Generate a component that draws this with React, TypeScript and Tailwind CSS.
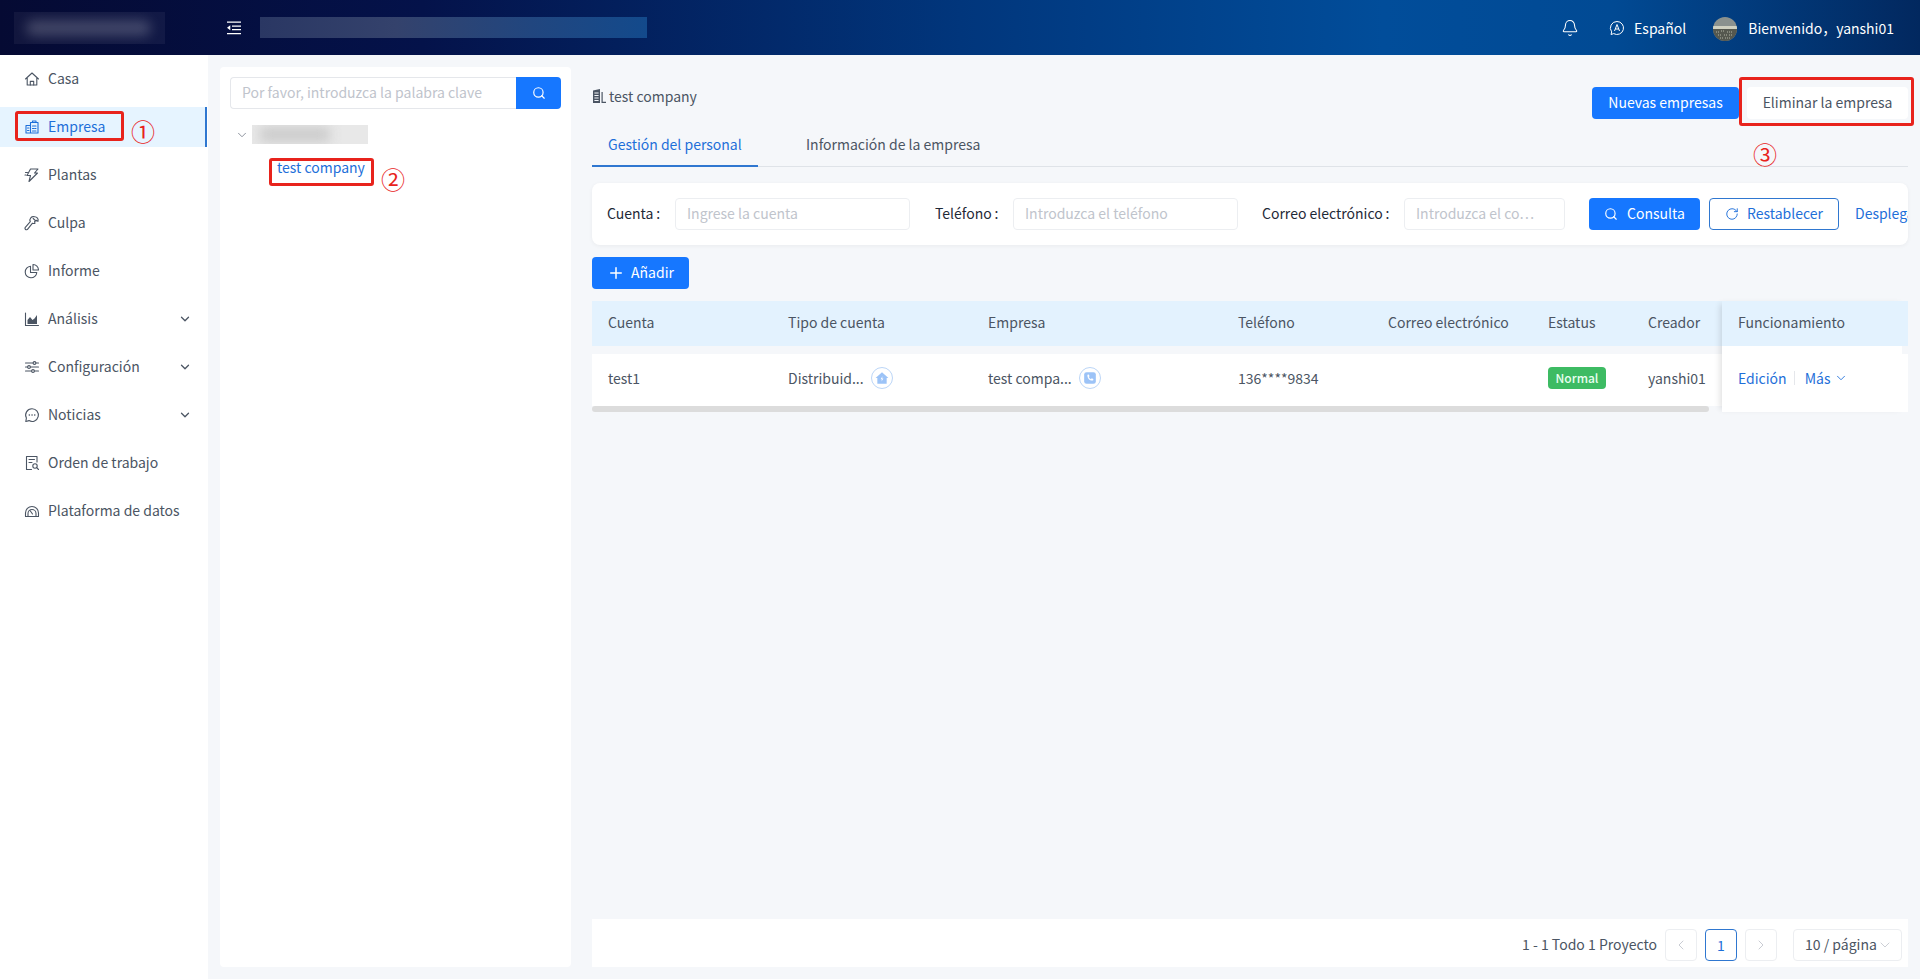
import { ReactNode } from "react";
import { Bell, ChevronDown, ChevronLeft, ChevronRight, Plus, RotateCw, Search } from "lucide-react";

const font = "font-['Noto_Sans_CJK_SC','Noto_Sans',sans-serif]";

const Svg = ({ children, className = "h-4 w-4" }: { children: ReactNode; className?: string }) => (
  <svg viewBox="0 0 16 16" fill="none" stroke="currentColor" strokeWidth="1.1" strokeLinecap="round" strokeLinejoin="round" className={className}>
    {children}
  </svg>
);

const HomeIcon = () => (
  <Svg>
    <path d="M1.5 8 8 2l6.5 6M3.2 6.8V14h9.6V6.8" />
    <path d="M6.3 14v-3.6h3.4V14" />
  </Svg>
);
const CompanyIcon = () => (
  <Svg>
    <path d="M2 6.5h4.5V14H2zM6.5 3.5h7.5V14H6.5z" />
    <path d="M8.5 3.5V2h3.5v1.500M3.5 9h1.500M3.500 11.500h1.500M8.500 7h3.500M8.500 9.500h1.500M11 9.500h1M8.500 12h3.500" />
  </Svg>
);
const BoltIcon = () => (
  <Svg>
    <path d="M6.500 2H14l-3.500 4H13.500L5 14.500l1.500-6H3z" />
    <path d="M1.500 5.500h2M1 8h1" />
  </Svg>
);
const WrenchIcon = () => (
  <Svg>
    <path d="M10.500 1.800a3.500 3.500 0 0 1 3.500 4.600l-1.800-1.200-1.600 1.200.3 2a3.500 3.500 0 0 1-2.400-.2l-4.800 6a1.500 1.500 0 0 1-2.400-1.900l5-5.600a3.500 3.500 0 0 1 4.200-4.900z" />
    <path d="M9.200 3.500 12 6.200" />
  </Svg>
);
const PieIcon = () => (
  <Svg>
    <path d="M6.500 3.200a5.800 5.800 0 1 0 6.300 6.300H6.500z" />
    <path d="M9 1.500a5.500 5.500 0 0 1 5.500 5.500H9z" />
  </Svg>
);
const AreaIcon = () => (
  <Svg>
    <path d="M1.500 2v12.500h13" />
    <path d="M3.500 13V9l2.500-3 2.500 3 2-1.500L13 4v9z" fill="currentColor" stroke="none" />
  </Svg>
);
const SlidersIcon = () => (
  <Svg>
    <path d="M1.500 4h7.500M12 4h2.500M1.500 8h2M6.500 8h8M1.500 12h6M10.500 12h4" />
    <circle cx="10.500" cy="4" r="1.400" />
    <circle cx="5" cy="8" r="1.400" />
    <circle cx="9" cy="12" r="1.400" />
  </Svg>
);
const ChatIcon = () => (
  <Svg>
    <path d="M8 1.800a6.300 6.300 0 1 1-3 11.800L1.800 14.500l.6-3.400A6.300 6.300 0 0 1 8 1.800z" />
    <path d="M5.300 8h.1M8 8h.1M10.700 8h.1" strokeWidth="1.500" />
  </Svg>
);
const OrderIcon = () => (
  <Svg>
    <path d="M13 7V1.500H2.500v13h5" />
    <path d="M5 4.500h5.500M5 7.500h3" />
    <circle cx="11" cy="11" r="2.200" />
    <path d="m12.700 12.700 1.800 1.800" />
  </Svg>
);
const GaugeIcon = () => (
  <Svg>
    <path d="M1.500 13.500V10a6.500 6.500 0 0 1 13 0v3.500z" />
    <path d="M4 13.500V10.500a4 4 0 0 1 8 0v3M6 7.500 8.500 11" />
  </Svg>
);
const OutdentIcon = () => (
  <svg viewBox="0 0 16 16" fill="currentColor" className="h-4 w-4">
    <path d="M1 1.500h14v1.300H1zM6 5.500h9v1.300H6zM6 9h9v1.300H6zM1 13h14v1.300H1zM4.300 5.300v5L1 7.800z" />
  </svg>
);
const TranslateIcon = () => (
  <svg viewBox="0 0 16 16" fill="none" stroke="currentColor" strokeWidth="1" strokeLinejoin="round" className="h-4 w-4">
    <path d="M8 1.500a6.500 6.500 0 1 1-3.300 12.100l-2.700.9.700-2.600A6.500 6.500 0 0 1 8 1.500z" />
    <path d="M5.500 11 8 4.500l2.500 6.500M6.400 9h3.200" />
  </svg>
);
const BuildingIcon = () => (
  <svg viewBox="0 0 14 14" fill="#4b5563" className="h-[14px] w-[14px]">
    <path d="M1 1.500 8 0v14H1zM2.400 3.500v1h4.200v-1zM2.400 6v1h4.200V6zM2.400 8.500v1h4.200v-1zM2.400 11v1h4.200v-1z" fillRule="evenodd" />
    <path d="M9.500 3h1.200v9.800H14V14H9.500z" />
  </svg>
);
const HouseBadge = () => (
  <span className="flex h-[22px] w-[22px] items-center justify-center rounded-full border border-[#bcd6f7] bg-white">
    <svg viewBox="0 0 12 12" fill="#9cc3f7" className="h-[14px] w-[14px]">
      <path d="M6 1 11.500 6H10v5H2V6H.5z" />
      <path d="M6.400 4.500 4.800 7h1.100l-.3 2L7.200 6.400H6.100z" fill="#fff" />
    </svg>
  </span>
);
const PhoneBadge = () => (
  <span className="flex h-[22px] w-[22px] items-center justify-center rounded-full border border-[#bcd6f7] bg-white">
    <svg viewBox="0 0 12 12" className="h-[14px] w-[14px]">
      <rect x="1" y="1" width="10" height="10" rx="2" fill="#9cc3f7" />
      <path d="M3.800 3.200 5 3l.6 1.500-.7.600c.4.800 1 1.400 1.900 1.900l.6-.7 1.500.6-.2 1.300c-3 .3-5.200-2-4.900-5z" fill="#fff" />
    </svg>
  </span>
);

const Circled = ({ children, className }: { children: string; className: string }) => (
  <span className={`absolute text-[24px] leading-none text-[#e8231c] ${className}`}>{children}</span>
);

const menu: { icon: ReactNode; label: string; arrow?: boolean; active?: boolean }[] = [
  { icon: <HomeIcon />, label: "Casa" },
  { icon: <CompanyIcon />, label: "Empresa", active: true },
  { icon: <BoltIcon />, label: "Plantas" },
  { icon: <WrenchIcon />, label: "Culpa" },
  { icon: <PieIcon />, label: "Informe" },
  { icon: <AreaIcon />, label: "Análisis", arrow: true },
  { icon: <SlidersIcon />, label: "Configuración", arrow: true },
  { icon: <ChatIcon />, label: "Noticias", arrow: true },
  { icon: <OrderIcon />, label: "Orden de trabajo" },
  { icon: <GaugeIcon />, label: "Plataforma de datos" },
];

const Header = () => (
  <header className="flex h-[55px] shrink-0 items-center bg-[linear-gradient(90deg,#050a33_0%,#04124a_22%,#01367c_50%,#014d9a_72%,#014a94_84%,#02285f_100%)] text-sm text-white">
    <div className="ml-[14px] h-[32px] w-[151px] overflow-hidden bg-white/5">
      <div className="ml-[12px] mt-[8px] h-[16px] w-[125px] rounded-full bg-white/20 blur-[6px]" />
    </div>
    <span className="ml-[61px] text-white">
      <OutdentIcon />
    </span>
    <div className="ml-[18px] h-[21px] w-[387px] bg-[linear-gradient(90deg,#2a3763,#34426c_35%,#21467f_70%,#134a8c)]" />
    <div className="ml-auto flex items-center">
      <Bell className="mr-[30px] h-[18px] w-[18px]" strokeWidth={1.4} />
      <span className="mr-[9px]">
        <TranslateIcon />
      </span>
      <span>Español</span>
      <svg viewBox="0 0 24 24" className="ml-[27px] mt-[2px] h-6 w-6 rounded-full">
        <rect width="24" height="24" fill="#8a918e" />
        <rect y="9" width="24" height="3" fill="#cfd0c0" />
        <rect y="12" width="24" height="12" fill="#55584f" />
        <path d="M3 15h3M8 14h4M14 15h5M5 18h4M11 18h3M16 18h4M7 21h3M12 21h5" stroke="#b4b6a8" strokeWidth="1.200" strokeDasharray="1 1" />
      </svg>
      <span className="ml-[11px] mr-[26px]">Bienvenido，yanshi01</span>
    </div>
  </header>
);

const Sidebar = () => (
  <aside className="relative flex w-[208px] shrink-0 flex-col gap-2 bg-white pt-1 text-sm text-[#4b5563]">
    {menu.map((m) => (
      <div
        key={m.label}
        className={`flex h-10 items-center pl-[24px] pr-[16px] ${m.active ? "mr-px border-r-[2px] border-[#2f77d0] bg-[#e6f4ff] text-[#1e6fd9]" : ""}`}
      >
        <span className="mr-[8px]">{m.icon}</span>
        <span className="pb-[2px]">{m.label}</span>
        {m.arrow && <ChevronDown className="ml-auto h-[14px] w-[14px]" strokeWidth={2.2} />}
      </div>
    ))}
    <div className="absolute left-[15px] top-[56px] h-[30px] w-[109px] rounded-[3px] border-[3px] border-[#e8231c]" />
    <Circled className="left-[131px] top-[64px]">①</Circled>
  </aside>
);

const CompanyTree = () => (
  <section className="relative flex w-[351px] shrink-0 flex-col rounded bg-white p-[10px] text-sm">
    <div className="flex h-8">
      <div className="flex flex-1 items-center rounded-l border border-r-0 border-[#e5e7eb] pb-[2px] pl-[11px] text-[#c0c4cc]">Por favor, introduzca la palabra clave</div>
      <div className="flex w-[45px] items-center justify-center rounded-r bg-[#1677ff] text-white">
        <Search className="h-[14px] w-[14px]" strokeWidth={2} />
      </div>
    </div>
    <div className="ml-[5px] mt-[16px] flex h-[19px] items-center">
      <ChevronDown className="h-[14px] w-[14px] text-[#6b7280]" strokeWidth={1.3} />
      <div className="ml-[3px] h-[19px] w-[116px] overflow-hidden bg-[#e8e8e8]">
        <div className="ml-[8px] mt-[2px] h-[15px] w-[70px] bg-[#cbcbcb] blur-[6px]" />
      </div>
    </div>
    <div className="ml-[47px] mt-[11px] leading-[24px] text-[#1e6fd9]">test company</div>
    <div className="absolute left-[49px] top-[91px] h-[28px] w-[105px] rounded-[3px] border-[3px] border-[#e8231c]" />
    <Circled className="left-[161px] top-[100px]">②</Circled>
  </section>
);

const Field = ({ label, placeholder, labelW, inputW }: { label: string; placeholder: string; labelW: string; inputW: string }) => (
  <div className="flex shrink-0 items-center">
    <span className={`${labelW} shrink-0 pb-[2px] text-[#1f2937]`}>{label}</span>
    <div className={`${inputW} flex h-8 items-center overflow-hidden whitespace-nowrap rounded border border-[#eceef1] pb-[2px] pl-[11px] text-[#c0c4cc]`}>{placeholder}</div>
  </div>
);

const FilterCard = () => (
  <div className="mt-[16px] flex h-[62px] shrink-0 items-center overflow-hidden rounded-lg bg-white pl-[15px] text-sm shadow-[0_1px_4px_rgba(0,0,0,0.05)]">
    <Field label={"Cuenta\u2009:"} placeholder="Ingrese la cuenta" labelW="w-[68px]" inputW="w-[235px]" />
    <div className="ml-[25px] shrink-0">
      <Field label={"Teléfono\u2009:"} placeholder="Introduzca el teléfono" labelW="w-[78px]" inputW="w-[225px]" />
    </div>
    <div className="ml-[24px] shrink-0">
      <Field label={"Correo electrónico\u2009:"} placeholder="Introduzca el co⋯" labelW="w-[142px]" inputW="w-[161px]" />
    </div>
    <button className="ml-[24px] flex h-8 w-[111px] shrink-0 items-center justify-center gap-[9px] rounded bg-[#1677ff] text-white">
      <Search className="h-[14px] w-[14px]" strokeWidth={2} />
      <span className="pb-[2px]">Consulta</span>
    </button>
    <button className="ml-[9px] flex h-8 w-[130px] shrink-0 items-center justify-center gap-2 rounded border border-[#2f77d0] text-[#1e6fd9]">
      <RotateCw className="h-[14px] w-[14px]" strokeWidth={1.6} />
      <span className="pb-[2px]">Restablecer</span>
    </button>
    <span className="ml-[16px] whitespace-nowrap pb-[2px] text-[#1e6fd9]">Desplegar</span>
  </div>
);

const columns: { title: string; width: string; cell: ReactNode }[] = [
  { title: "Cuenta", width: "w-[180px]", cell: "test1" },
  {
    title: "Tipo de cuenta",
    width: "w-[200px]",
    cell: (
      <span className="flex items-center gap-[7px]">
        Distribuid... <HouseBadge />
      </span>
    ),
  },
  {
    title: "Empresa",
    width: "w-[250px]",
    cell: (
      <span className="flex items-center gap-[7px]">
        test compa... <PhoneBadge />
      </span>
    ),
  },
  { title: "Teléfono", width: "w-[150px]", cell: "136****9834" },
  { title: "Correo electrónico", width: "w-[160px]", cell: "" },
  {
    title: "Estatus",
    width: "w-[100px]",
    cell: <span className="flex h-[22px] w-[58px] items-center justify-center rounded bg-[#3dbb63] text-xs font-medium text-[#e8fff0]">Normal</span>,
  },
  { title: "Creador", width: "w-[90px]", cell: "yanshi01" },
];

const UserTable = () => (
  <div className="mt-[12px] flex shrink-0 text-sm text-[#4b5563]">
    <div className="flex w-[1130px] flex-col">
      <div className="flex h-[45px] items-center bg-[#e3f2fe] pb-[3px]">
        {columns.map((c) => (
          <div key={c.title} className={`${c.width} pl-4`}>
            {c.title}
          </div>
        ))}
      </div>
      <div className="mt-2 flex h-[52px] items-center bg-white pb-[5px]">
        {columns.map((c) => (
          <div key={c.title} className={`${c.width} pl-4`}>
            {c.cell}
          </div>
        ))}
      </div>
      <div className="h-[6px] w-[1117px] rounded-full bg-[#dcdcdc]" />
    </div>
    <div className="z-10 flex w-[186px] flex-col shadow-[-5px_0_6px_-3px_rgba(0,0,0,0.12)]">
      <div className="flex h-[45px] items-center bg-[#e3f2fe] pb-[3px] pl-4">Funcionamiento</div>
      <div className="h-2 w-[180px] bg-white" />
      <div className="flex h-[58px] items-center bg-white pb-[11px] pl-4 text-[#1e6fd9]">
        Edición
        <span className="ml-[7px] mr-[10px] h-[14px] w-px bg-[#e5e7eb]" />
        Más
        <ChevronDown className="ml-[4px] h-[14px] w-[14px]" strokeWidth={1.5} />
      </div>
    </div>
  </div>
);

const Pagination = () => (
  <div className="mt-auto flex h-[48px] shrink-0 items-start justify-end bg-white pr-[6px] pt-[10px] text-sm text-[#4b5563]">
    <span className="mr-[8px] flex h-8 items-center pb-[2px]">1 - 1 Todo 1 Proyecto</span>
    <span className="flex h-8 w-8 items-center justify-center rounded border border-[#eceef1] text-[#c0c4cc]">
      <ChevronLeft className="h-4 w-4" strokeWidth={1.3} />
    </span>
    <span className="ml-2 flex h-8 w-8 items-center justify-center rounded border border-[#2f77d0] text-[#1e6fd9]">1</span>
    <span className="ml-2 flex h-8 w-8 items-center justify-center rounded border border-[#eceef1] text-[#c0c4cc]">
      <ChevronRight className="h-4 w-4" strokeWidth={1.3} />
    </span>
    <span className="ml-4 flex h-8 w-[109px] items-center rounded border border-[#eceef1] pl-[11px]">
      <span className="pb-[2px]">10 / página</span>
      <ChevronDown className="h-4 w-4 text-[#c0c4cc]" strokeWidth={1.2} />
    </span>
  </div>
);

const CompanyPanel = () => (
  <main className="relative ml-[21px] flex w-[1316px] shrink-0 flex-col text-sm">
    <div className="flex h-[32px] items-center justify-between">
      <div className="mb-[14px] flex items-center gap-[3px] text-[#4b5563]">
        <BuildingIcon />
        test company
      </div>
      <div className="flex gap-[8px]">
        <button className="flex h-8 w-[147px] items-center justify-center rounded bg-[#1677ff] pb-[2px] text-white">Nuevas empresas</button>
        <button className="flex h-8 w-[161px] items-center justify-center rounded bg-white pb-[2px] text-[#4b5563]">Eliminar la empresa</button>
      </div>
    </div>
    <div className="mt-[6px] flex h-[42px] shrink-0 items-center border-b border-[#dfe3e8] text-[#4b5563]">
      <div className="flex h-[42px] w-[166px] items-center border-b-[2px] border-[#2f77d0] pb-[2px] pl-4 text-[#1e6fd9]">Gestión del personal</div>
      <div className="ml-[48px] pb-[4px]">Información de la empresa</div>
    </div>
    <FilterCard />
    <button className="mt-[12px] flex h-8 w-[97px] shrink-0 items-center justify-center gap-[6px] rounded bg-[#1677ff] text-white">
      <Plus className="h-[18px] w-[18px]" strokeWidth={2} />
      <span className="pb-[2px]">Añadir</span>
    </button>
    <UserTable />
    <Pagination />
    <div className="absolute left-[1147px] top-[-10px] h-[49px] w-[175px] rounded-[3px] border-[3px] border-[#e8231c]" />
    <Circled className="left-[1161px] top-[55px]">③</Circled>
  </main>
);

export default function App() {
  return (
    <div className={`${font} flex h-[979px] flex-col overflow-hidden bg-[#f5f7fa]`}>
      <Header />
      <div className="flex flex-1">
        <Sidebar />
        <div className="my-[12px] ml-[12px] flex">
          <CompanyTree />
        </div>
        <div className="mb-[12px] mt-[32px] flex">
          <CompanyPanel />
        </div>
      </div>
    </div>
  );
}
